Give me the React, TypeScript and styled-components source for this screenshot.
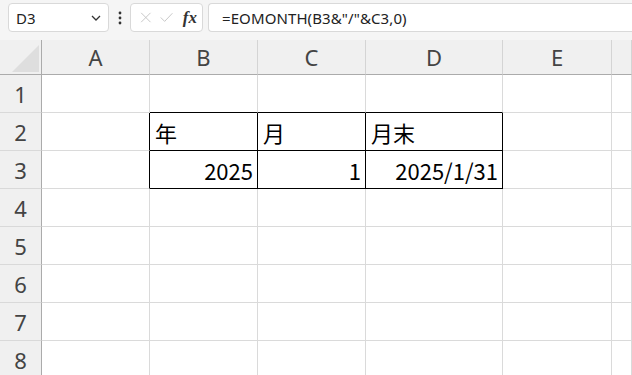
import { Fragment } from 'react';
import styled, { createGlobalStyle } from 'styled-components';

const GlobalStyle = createGlobalStyle`
  html, body {
    margin: 0;
    padding: 0;
    background: #fff;
    overflow: hidden;
  }
`;

const Page = styled.div`
  width: 632px;
  height: 375px;
  overflow: hidden;
  font-family: "Noto Sans", "Noto Sans CJK JP", sans-serif;
`;

const Toolbar = styled.div`
  height: 40px;
  background: #f5f5f5;
  display: flex;
  align-items: flex-start;
  padding: 3px 0 0 8px;
  box-sizing: border-box;
`;

const Box = styled.div<{ $width?: number }>`
  height: 29px;
  box-sizing: border-box;
  background: #fff;
  border: 1px solid #d9d9d9;
  border-radius: 4px;
  display: flex;
  align-items: center;
  ${({ $width }) => ($width ? `width: ${$width}px;` : 'flex: 1;')}
`;

const NameBox = styled(Box)`
  justify-content: space-between;
  padding: 0 6px 0 7px;
  font-size: 15px;
  color: #222;
`;

const Dots = styled.div`
  width: 21px;
  display: flex;
  justify-content: center;
  padding-top: 8px;
`;

const ActionBox = styled(Box)`
  padding: 0 5px 0 9px;
  gap: 8px;
`;

const Fx = styled.span`
  font-family: "Liberation Serif", serif;
  font-style: italic;
  font-weight: bold;
  font-size: 17px;
  color: #333;
  margin-left: 2px;
`;

const FormulaBox = styled(Box)`
  margin-left: 5px;
  border-right: none;
  border-radius: 4px 0 0 4px;
  padding-left: 13px;
  font-size: 15px;
  color: #222;
  letter-spacing: 0.1px;
`;

const Sheet = styled.div`
  display: grid;
  grid-template-columns: 42px 108px 108px 108px 137px 109px 1fr;
  grid-template-rows: 35px repeat(8, 38px);
`;

const Corner = styled.div`
  background: #f0f0f0;
  border-right: 1px solid #ababab;
  border-bottom: 1px solid #ababab;
  box-sizing: border-box;
  position: relative;
`;

const ColHead = styled.div`
  background: #f0f0f0;
  border-right: 1px solid #d4d4d4;
  border-bottom: 1px solid #ababab;
  box-sizing: border-box;
  display: flex;
  align-items: center;
  justify-content: center;
  font-size: 22px;
  color: #444;
  padding-bottom: 1px;
`;

const RowHead = styled.div`
  background: #f0f0f0;
  border-right: 1px solid #ababab;
  border-bottom: 1px solid #d9d9d9;
  box-sizing: border-box;
  display: flex;
  align-items: center;
  justify-content: center;
  font-size: 22px;
  color: #444;
`;

const Cell = styled.div<{ $right?: boolean; $darkR?: boolean; $darkB?: boolean }>`
  border-right: 1px solid ${({ $darkR }) => ($darkR ? '#000' : '#dadada')};
  border-bottom: 1px solid ${({ $darkB }) => ($darkB ? '#000' : '#dadada')};
  box-sizing: border-box;
  display: flex;
  align-items: center;
  justify-content: ${({ $right }) => ($right ? 'flex-end' : 'flex-start')};
  padding: 0 4px 0 5px;
  font-family: "Noto Sans CJK JP", sans-serif;
  font-size: 22px;
  color: #000;
  white-space: nowrap;
  overflow: hidden;
`;

const columns = ['A', 'B', 'C', 'D', 'E', ''];
const rows = [1, 2, 3, 4, 5, 6, 7, 8];

type CellData = { text?: string; right?: boolean };

const data: Record<string, CellData> = {
  B2: { text: '年' },
  C2: { text: '月' },
  D2: { text: '月末' },
  B3: { text: '2025', right: true },
  C3: { text: '1', right: true },
  D3: { text: '2025/1/31', right: true },
};

const inTable = (col: string, row: number) =>
  ['B', 'C', 'D'].includes(col) && (row === 2 || row === 3);

const App = () => (
  <Page>
    <GlobalStyle />
    <Toolbar>
      <NameBox $width={101}>
        <span>D3</span>
        <svg width="12" height="8" viewBox="0 0 12 8">
          <path d="M2 2 L6 6 L10 2" fill="none" stroke="#333" strokeWidth="1.3" />
        </svg>
      </NameBox>
      <Dots>
        <svg width="4" height="14" viewBox="0 0 4 14">
          <circle cx="2" cy="2" r="1.4" fill="#333" />
          <circle cx="2" cy="7" r="1.4" fill="#333" />
          <circle cx="2" cy="12" r="1.4" fill="#333" />
        </svg>
      </Dots>
      <ActionBox $width={73}>
        <svg width="15" height="15" viewBox="0 0 15 15">
          <path d="M1.5 1.5 L13.5 13.5 M13.5 1.5 L1.5 13.5" stroke="#c4c4c4" strokeWidth="1.2" />
        </svg>
        <svg width="17" height="15" viewBox="0 0 17 15">
          <path d="M1 7.5 L6 12.5 L16 2" fill="none" stroke="#c4c4c4" strokeWidth="1.2" />
        </svg>
        <Fx>fx</Fx>
      </ActionBox>
      <FormulaBox>=EOMONTH(B3&amp;"/"&amp;C3,0)</FormulaBox>
    </Toolbar>
    <Sheet>
      <Corner>
        <svg width="42" height="35" viewBox="0 0 42 35" style={{ position: 'absolute', left: 0, top: 0 }}>
          <polygon points="12,32 39,5 39,32" fill="#dedede" />
        </svg>
      </Corner>
      {columns.map((c, i) => (
        <ColHead key={i}>{c}</ColHead>
      ))}
      {rows.map((r) => (
        <Fragment key={r}>
          <RowHead>{r}</RowHead>
          {columns.map((c, i) => {
            const d = data[`${c}${r}`] || {};
            const darkR = inTable(c, r) || (c === 'A' && (r === 2 || r === 3));
            const darkB = inTable(c, r) || (r === 1 && ['B', 'C', 'D'].includes(c));
            return (
              <Cell key={i} $right={d.right} $darkR={darkR} $darkB={darkB}>
                {d.text}
              </Cell>
            );
          })}
        </Fragment>
      ))}
    </Sheet>
  </Page>
);

export default App;
